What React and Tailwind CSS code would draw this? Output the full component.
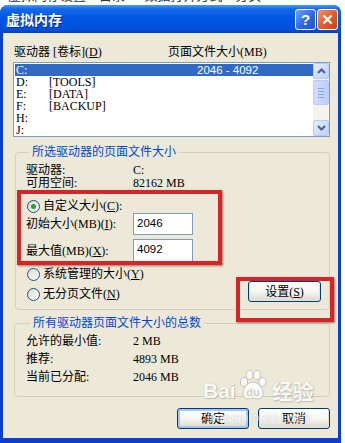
import React from 'react';

const serif = "font-['Liberation_Serif','Noto_Sans_CJK_SC',serif]";

const Radio = ({ checked }) => (
  <span className="w-[13px] h-[13px] shrink-0 rounded-full border border-[#1c5180] bg-[linear-gradient(135deg,#d9d8d0,#ffffff)] flex items-center justify-center">
    {checked && <span className="w-[5px] h-[5px] rounded-full bg-[#2aa12a]" />}
  </span>
);

const XpButton = ({ children, className = '', focused }) => (
  <div
    className={`rounded-[3px] border border-[#003c74] bg-[linear-gradient(180deg,#ffffff_0%,#f4f4f0_55%,#dcd7cb_100%)] flex items-center justify-center text-[12px] ${
      focused ? 'shadow-[inset_0_0_0_2px_#a9c3f3]' : 'shadow-[inset_0_-1px_0_1px_#e3dfd3]'
    } ${className}`}
  >
    {children}
  </div>
);

const Chevron = ({ up }) => (
  <svg width="9" height="6" viewBox="0 0 9 6">
    <path d={up ? 'M1 5 L4.5 1.5 L8 5' : 'M1 1 L4.5 4.5 L8 1'} fill="none" stroke="#4d6185" strokeWidth="2" />
  </svg>
);

const drives = [
  { d: 'C:', label: '', size: '2046 - 4092', selected: true },
  { d: 'D:', label: '[TOOLS]' },
  { d: 'E:', label: '[DATA]' },
  { d: 'F:', label: '[BACKUP]' },
  { d: 'H:', label: '' },
  { d: 'J:', label: '' },
];

export default function App() {
  return (
    <div className={`relative w-[345px] h-[443px] overflow-hidden bg-white text-black ${serif}`}>
      {/* page behind the dialog */}
      <div className="h-[5px] overflow-hidden">
        <div className="-mt-[11px] pl-[8px] text-[13px] leading-[14px] text-[#333] whitespace-nowrap">
          虚拟内存设置 &nbsp;&nbsp; 目录 &nbsp;&nbsp;&nbsp;&nbsp; 数据打开方式 &nbsp;&nbsp; 分页
        </div>
      </div>

      <div className="w-[341px] h-[438px] flex flex-col rounded-t-[8px] overflow-hidden bg-[#0b3dd0]">
        {/* Title bar */}
        <div className="h-[28px] shrink-0 flex items-center pl-[6px] pr-[3px] bg-[linear-gradient(180deg,#4a98fa_0%,#1468ea_14%,#0055e3_50%,#0052dd_85%,#0043c2_100%)]">
          <span className="flex-1 text-white font-bold text-[14px] font-['Noto_Sans_CJK_SC',sans-serif] [text-shadow:1px_1px_0_#0a2a8a]">
            虚拟内存
          </span>
          <div className="w-[21px] h-[21px] rounded-[3px] border border-white bg-[linear-gradient(135deg,#6fa2ff,#2a63e8_60%,#1f55d6)] flex items-center justify-center text-white font-bold text-[15px] leading-none font-['Liberation_Sans',sans-serif]">
            ?
          </div>
          <div className="ml-[1px] w-[21px] h-[21px] rounded-[3px] border border-white bg-[linear-gradient(135deg,#f0956e,#e05a2c_55%,#c8431b)] flex items-center justify-center">
            <svg width="11" height="11" viewBox="0 0 11 11">
              <path d="M1.5 1.5 L9.5 9.5 M9.5 1.5 L1.5 9.5" stroke="white" strokeWidth="2.2" />
            </svg>
          </div>
        </div>

        {/* Body */}
        <div className="flex-1 mx-[3px] mb-[5px] bg-[#ece9d8] flex flex-col text-[12px]">
          <div className="mt-[13px] ml-[11px] flex h-[13px] leading-[13px]">
            <span className="w-[154px]">
              驱动器 [卷标](<u>D</u>)
            </span>
            <span>页面文件大小(MB)</span>
          </div>

          {/* Drive list */}
          <div className="mt-[3px] ml-[10px] w-[317px] h-[75px] border border-[#7f9db9] bg-white flex">
            <div className="flex-1 pt-[1px] pl-[1px]">
              {drives.map((r) => (
                <div
                  key={r.d}
                  className={`flex h-[12px] leading-[12px] pl-[1px] ${r.selected ? 'bg-[#316ac5] text-white' : ''}`}
                >
                  <span className="w-[33px]">{r.d}</span>
                  <span className="w-[148px]">{r.label}</span>
                  <span className="font-['Liberation_Sans',sans-serif] text-[11.5px]">{r.size}</span>
                </div>
              ))}
            </div>
            <div className="w-[16px] bg-[#f4f3ee] flex flex-col">
              <div className="h-[16px] rounded-[2px] border border-[#b9cbf3] bg-[linear-gradient(135deg,#e6eeff,#bccffb)] flex items-center justify-center">
                <Chevron up />
              </div>
              <div className="mt-[1px] h-[25px] rounded-[2px] border border-[#b9cbf3] bg-[linear-gradient(90deg,#cfdcfd,#bccffb)] flex flex-col items-center justify-center gap-[2px]">
                <span className="w-[6px] h-[1px] bg-[#8ca4e6]" />
                <span className="w-[6px] h-[1px] bg-[#8ca4e6]" />
                <span className="w-[6px] h-[1px] bg-[#8ca4e6]" />
                <span className="w-[6px] h-[1px] bg-[#8ca4e6]" />
              </div>
              <div className="flex-1" />
              <div className="h-[16px] rounded-[2px] border border-[#b9cbf3] bg-[linear-gradient(135deg,#e6eeff,#bccffb)] flex items-center justify-center">
                <Chevron />
              </div>
            </div>
          </div>

          {/* Selected drive group */}
          <fieldset className="mt-[8px] ml-[12px] w-[315px] h-[165px] border border-[#d0d0bf] rounded-[4px] pl-[10px] pr-[8px]">
            <legend className="ml-[3px] px-[3px] text-[#0046d5] leading-[14px]">所选驱动器的页面文件大小</legend>
            <div className="mt-[5px] flex h-[13px] leading-[13px]">
              <span className="w-[107px]">驱动器:</span>
              <span>C:</span>
            </div>
            <div className="flex h-[13px] leading-[13px]">
              <span className="w-[107px]">可用空间:</span>
              <span>82162 MB</span>
            </div>
            <div className="mt-[9px] flex items-center h-[14px] ml-[1px] gap-[3px]">
              <Radio checked />
              <span>
                自定义大小(<u>C</u>):
              </span>
            </div>
            <div className="flex items-center h-[22px]">
              <span className="w-[107px]">
                初始大小(MB)(<u>I</u>):
              </span>
              <div className="w-[60px] h-[22px] border border-[#7f9db9] bg-white pl-[3px] leading-[18px] font-['Liberation_Sans',sans-serif] text-[11.5px]">
                2046
              </div>
            </div>
            <div className="mt-[4px] flex items-center h-[23px]">
              <span className="w-[107px]">
                最大值(MB)(<u>X</u>):
              </span>
              <div className="w-[60px] h-[23px] border border-[#7f9db9] bg-white pl-[3px] leading-[18px] font-['Liberation_Sans',sans-serif] text-[11.5px]">
                4092
              </div>
            </div>
            <div className="flex items-end justify-between">
              <div className="flex flex-col">
                <div className="mt-[4px] flex items-center h-[16px] ml-[1px] gap-[3px]">
                  <Radio />
                  <span>
                    系统管理的大小(<u>Y</u>)
                  </span>
                </div>
                <div className="mt-[4px] flex items-center h-[16px] ml-[1px] gap-[3px]">
                  <Radio />
                  <span>
                    无分页文件(<u>N</u>)
                  </span>
                </div>
              </div>
              <XpButton className="w-[73px] h-[21px]">
                设置(<u>S</u>)
              </XpButton>
            </div>
          </fieldset>

          {/* Totals group */}
          <fieldset className="mt-[6px] ml-[11px] w-[316px] h-[81px] border border-[#d0d0bf] rounded-[4px] pl-[11px]">
            <legend className="ml-[4px] px-[3px] text-[#0046d5] leading-[14px]">所有驱动器页面文件大小的总数</legend>
            <div className="mt-[2px] flex h-[18px] items-center">
              <span className="w-[107px]">允许的最小值:</span>
              <span>2 MB</span>
            </div>
            <div className="flex h-[18px] items-center">
              <span className="w-[107px]">推荐:</span>
              <span>4893 MB</span>
            </div>
            <div className="flex h-[18px] items-center">
              <span className="w-[107px]">当前已分配:</span>
              <span>2046 MB</span>
            </div>
          </fieldset>

          <div className="mt-[11px] pr-[8px] flex justify-end gap-[9px]">
            <XpButton focused className="w-[72px] h-[21px]">
              确定
            </XpButton>
            <XpButton className="w-[72px] h-[21px]">取消</XpButton>
          </div>
        </div>
      </div>

      {/* Baidu watermark */}
      <div className="absolute left-[203px] top-[369px] flex items-end gap-[2px] opacity-75 pointer-events-none">
        <span className="text-[21px] font-bold leading-none text-white font-['Liberation_Sans',sans-serif] [text-shadow:0_0_1px_#9a9a9a,1px_1px_1px_#b0b0b0]">
          Bai
        </span>
        <svg width="30" height="32" viewBox="0 0 30 32">
          <g fill="white" stroke="#aaaaaa" strokeWidth="0.8">
            <ellipse cx="6" cy="13" rx="3.5" ry="4.5" />
            <ellipse cx="11.5" cy="6" rx="3.5" ry="4.5" />
            <ellipse cx="19" cy="6" rx="3.5" ry="4.5" />
            <ellipse cx="24.5" cy="13" rx="3.5" ry="4.5" />
            <path d="M15 13 C9 13 4 21 5 26 C6 31 12 30 15 29 C18 30 24 31 25 26 C26 21 21 13 15 13 Z" />
          </g>
          <text x="15" y="27" textAnchor="middle" fontSize="11" fontWeight="bold" fill="#c8c8c8" fontFamily="Liberation Sans">
            du
          </text>
        </svg>
        <span className="ml-[2px] text-[21px] font-bold leading-none text-white font-['Noto_Sans_CJK_SC',sans-serif] [text-shadow:0_0_1px_#9a9a9a,1px_1px_1px_#b0b0b0]">
          经验
        </span>
      </div>
      <div className="absolute left-[207px] top-[411px] text-[13px] leading-none text-white opacity-60 font-['Liberation_Sans',sans-serif] [text-shadow:0_0_1px_#8a8a8a] pointer-events-none">
        jingyan.baidu.com
      </div>

      {/* Red highlight boxes */}
      <div className="absolute left-[17px] top-[190px] w-[205px] h-[75px] border-[4px] border-[#d42626] shadow-[1px_1px_2px_rgba(90,0,0,0.5)] pointer-events-none" />
      <div className="absolute left-[236px] top-[277px] w-[98px] h-[45px] border-[4px] border-[#d42626] shadow-[1px_1px_2px_rgba(90,0,0,0.5)] pointer-events-none" />
    </div>
  );
}
